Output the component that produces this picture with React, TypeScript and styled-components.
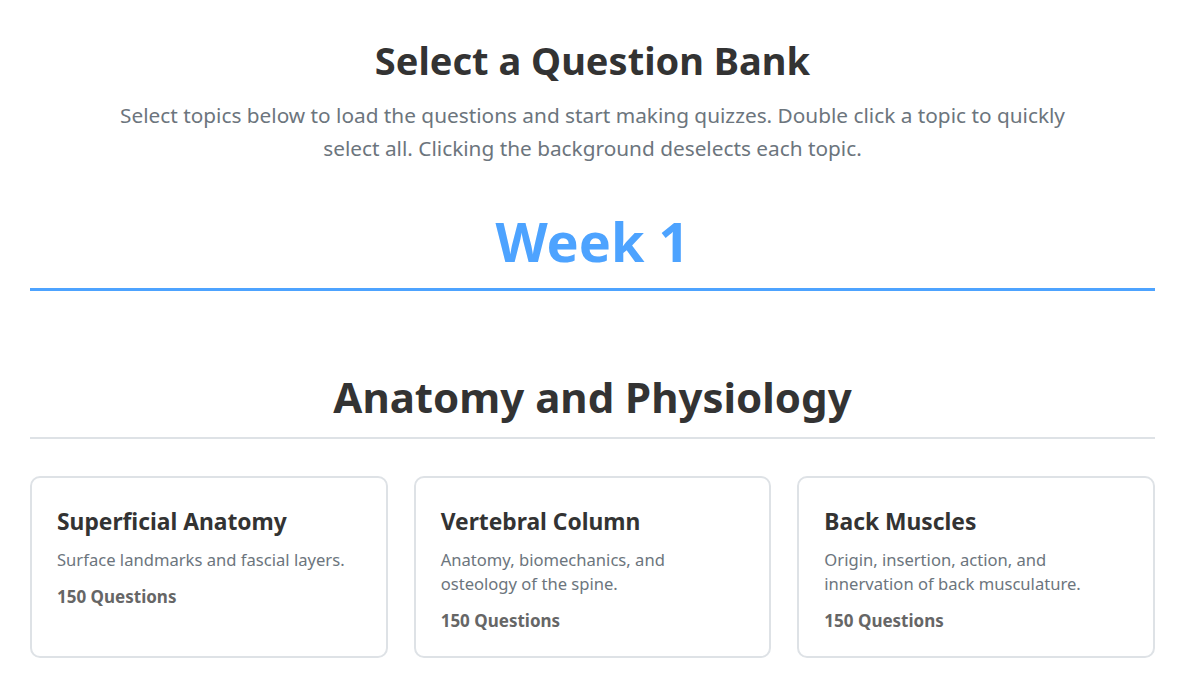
import { createGlobalStyle, styled } from 'styled-components';

const GlobalStyle = createGlobalStyle`
  * {
    box-sizing: border-box;
  }
  body {
    margin: 0;
    background: #ffffff;
    font-family: 'Noto Sans', 'Open Sans', sans-serif;
    color: #333333;
  }
`;

const S = {
  Page: styled.main`
    padding: 0 38px 40px 30px;
  `,

  Header: styled.header`
    text-align: center;
    padding-top: 38px;
  `,

  Title: styled.h1`
    margin: 0;
    font-size: 38px;
    font-weight: 700;
    line-height: 1.2;
    color: #333333;
  `,

  Subtitle: styled.p`
    margin: 15px auto 0;
    max-width: 965px;
    font-size: 20.8px;
    line-height: 33px;
    color: #6c757d;
  `,

  WeekTitle: styled.h2`
    margin: 44px 0 0;
    padding-bottom: 15px;
    border-bottom: 3px solid #4da3ff;
    text-align: center;
    font-size: 54px;
    font-weight: 700;
    line-height: 1.2;
    color: #4da3ff;
  `,

  Section: styled.section`
    margin-top: 81px;
  `,

  SectionTitle: styled.h3`
    margin: 0;
    padding-bottom: 14px;
    border-bottom: 2px solid #dee2e6;
    text-align: center;
    font-size: 42px;
    font-weight: 700;
    line-height: 1.2;
    color: #333333;
  `,

  Grid: styled.div`
    display: grid;
    grid-template-columns: repeat(3, 1fr);
    gap: 26px;
    margin-top: 37px;
  `,

  Card: styled.div`
    padding: 30px 25px 23px;
    border: 2px solid #dee2e6;
    border-radius: 10px;
    background: #ffffff;
    cursor: pointer;
  `,

  CardTitle: styled.h4`
    margin: 0 0 13px;
    font-size: 22.8px;
    font-weight: 700;
    line-height: 1.2;
    color: #333333;
  `,

  CardText: styled.p`
    margin: 0 0 13px;
    font-size: 16.6px;
    line-height: 24px;
    color: #6c757d;
  `,

  Count: styled.div`
    font-size: 17px;
    font-weight: 700;
    line-height: 24px;
    color: #666666;
  `,
};

const topics = [
  {
    id: 'superficial',
    title: 'Superficial Anatomy',
    description: 'Surface landmarks and fascial layers.',
    count: 150,
  },
  {
    id: 'vertebral',
    title: 'Vertebral Column',
    description: 'Anatomy, biomechanics, and osteology of the spine.',
    count: 150,
  },
  {
    id: 'back',
    title: 'Back Muscles',
    description: 'Origin, insertion, action, and innervation of back musculature.',
    count: 150,
  },
];

function App() {
  return (
    <>
      <GlobalStyle />
      <S.Page>
        <S.Header>
          <S.Title>Select a Question Bank</S.Title>
          <S.Subtitle>
            Select topics below to load the questions and start making quizzes. Double click a
            topic to quickly select all. Clicking the background deselects each topic.
          </S.Subtitle>
        </S.Header>

        <S.WeekTitle>Week 1</S.WeekTitle>

        <S.Section>
          <S.SectionTitle>Anatomy and Physiology</S.SectionTitle>
          <S.Grid>
            {topics.map((topic) => (
              <S.Card key={topic.id}>
                <S.CardTitle>{topic.title}</S.CardTitle>
                <S.CardText>{topic.description}</S.CardText>
                <S.Count>{topic.count} Questions</S.Count>
              </S.Card>
            ))}
          </S.Grid>
        </S.Section>
      </S.Page>
    </>
  );
}

export default App;
